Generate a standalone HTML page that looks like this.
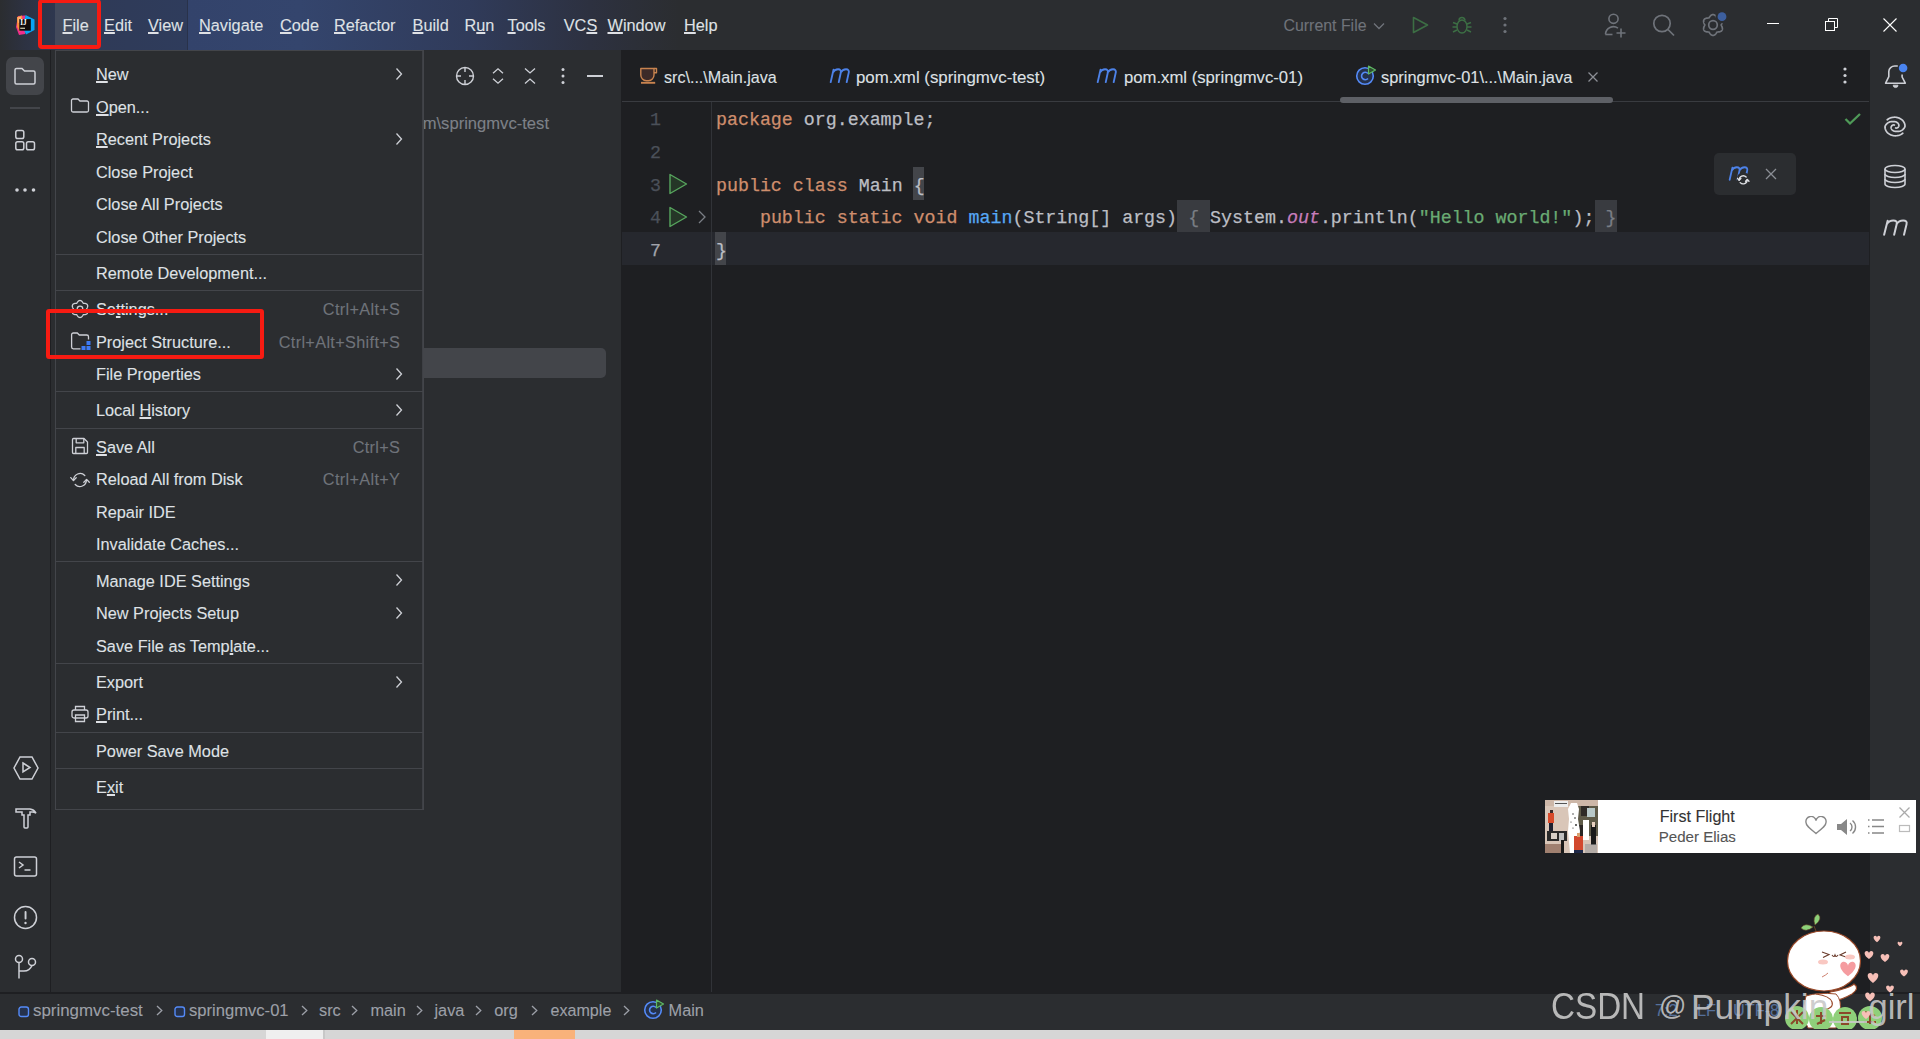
<!DOCTYPE html>
<html><head><meta charset="utf-8"><style>
html,body{margin:0;padding:0;width:1920px;height:1039px;overflow:hidden;background:#2B2D30;}
body>div,body>svg{position:absolute;}
.t{white-space:nowrap;line-height:normal;-webkit-text-stroke:0.1px currentColor;}
u{text-decoration:underline;text-decoration-thickness:1.7px;text-underline-offset:1px;}
</style></head><body>
<div style="left:0px;top:0px;width:1920px;height:1039px;background:#2B2D30;"></div>
<div style="left:0;top:0;width:1920px;height:50px;background:linear-gradient(90deg,#2B2D30 0px,#2D3242 25px,#2F3A56 70px,#2F3C5C 187px,#33436B 188px,#34456D 300px,#303B5A 470px,#2D3140 590px,#2B2D30 680px)"></div>
<div style="left:50px;top:50px;width:1px;height:943px;background:#1E1F22;"></div>
<div style="left:51px;top:50px;width:570px;height:943px;background:#2B2D30;"></div>
<div style="left:621px;top:50px;width:1px;height:943px;background:#1E1F22;"></div>
<div style="left:622px;top:50px;width:1247px;height:943px;background:#1E1F22;"></div>
<div style="left:622px;top:101px;width:1247px;height:1px;background:#393B40;"></div>
<div style="left:1869px;top:50px;width:1px;height:943px;background:#1E1F22;"></div>
<div style="left:1870px;top:50px;width:50px;height:943px;background:#2B2D30;"></div>
<div style="left:0px;top:992px;width:1920px;height:2px;background:#1E1F22;"></div>
<div style="left:0px;top:994px;width:1920px;height:36px;background:#2B2D30;"></div>
<div style="left:0px;top:1030px;width:1920px;height:9px;background:#D6D6D6;"></div>
<div style="left:266px;top:1030px;width:57px;height:9px;background:#EFEFEF;"></div>
<div style="left:323px;top:1030px;width:2px;height:9px;background:#C8C8C8;"></div>
<div style="left:514px;top:1030px;width:61px;height:9px;background:#F9B27A;"></div>
<div style="left:622px;top:232px;width:1247px;height:33px;background:#26282E;"></div>
<div style="left:711px;top:102px;width:1px;height:890px;background:#313338;"></div>
<div class="t" style="left:650px;top:110.26px;font-size:18.3px;color:#4B5059;font-family:'Liberation Mono', monospace;-webkit-text-stroke:0.25px currentColor;">1</div>
<div class="t" style="left:650px;top:142.93px;font-size:18.3px;color:#4B5059;font-family:'Liberation Mono', monospace;-webkit-text-stroke:0.25px currentColor;">2</div>
<div class="t" style="left:650px;top:175.60px;font-size:18.3px;color:#4B5059;font-family:'Liberation Mono', monospace;-webkit-text-stroke:0.25px currentColor;">3</div>
<div class="t" style="left:650px;top:208.27px;font-size:18.3px;color:#4B5059;font-family:'Liberation Mono', monospace;-webkit-text-stroke:0.25px currentColor;">4</div>
<div class="t" style="left:650px;top:240.94px;font-size:18.3px;color:#A1A3AB;font-family:'Liberation Mono', monospace;-webkit-text-stroke:0.25px currentColor;">7</div>
<div class="t" style="left:716.0px;top:110.26px;font-size:18.3px;color:#CF8E6D;font-family:'Liberation Mono', monospace;-webkit-text-stroke:0.25px currentColor;">package</div>
<div class="t" style="left:803.84px;top:110.26px;font-size:18.3px;color:#BCBEC4;font-family:'Liberation Mono', monospace;-webkit-text-stroke:0.25px currentColor;">org.example;</div>
<div class="t" style="left:716.0px;top:175.60px;font-size:18.3px;color:#CF8E6D;font-family:'Liberation Mono', monospace;-webkit-text-stroke:0.25px currentColor;">public class</div>
<div class="t" style="left:858.74px;top:175.60px;font-size:18.3px;color:#BCBEC4;font-family:'Liberation Mono', monospace;-webkit-text-stroke:0.25px currentColor;">Main</div>
<div style="left:913px;top:167px;width:11px;height:33px;background:#43454A;"></div>
<div class="t" style="left:913.64px;top:175.60px;font-size:18.3px;color:#BCBEC4;font-family:'Liberation Mono', monospace;-webkit-text-stroke:0.25px currentColor;">{</div>
<div class="t" style="left:759.92px;top:208.27px;font-size:18.3px;color:#CF8E6D;font-family:'Liberation Mono', monospace;-webkit-text-stroke:0.25px currentColor;">public static void</div>
<div class="t" style="left:968.54px;top:208.27px;font-size:18.3px;color:#56A8F5;font-family:'Liberation Mono', monospace;-webkit-text-stroke:0.25px currentColor;">main</div>
<div class="t" style="left:1012.46px;top:208.27px;font-size:18.3px;color:#BCBEC4;font-family:'Liberation Mono', monospace;-webkit-text-stroke:0.25px currentColor;">(String[] args)</div>
<div style="left:1177px;top:200px;width:33px;height:32px;background:#393B40;"></div>
<div class="t" style="left:1188.14px;top:208.27px;font-size:18.3px;color:#7A7E85;font-family:'Liberation Mono', monospace;-webkit-text-stroke:0.25px currentColor;">{</div>
<div class="t" style="left:1210.1px;top:208.27px;font-size:18.3px;color:#BCBEC4;font-family:'Liberation Mono', monospace;-webkit-text-stroke:0.25px currentColor;">System.</div>
<div class="t" style="left:1286.96px;top:208.27px;font-size:18.3px;color:#C77DBB;font-family:'Liberation Mono', monospace;-webkit-text-stroke:0.25px currentColor;font-style:italic">out</div>
<div class="t" style="left:1319.9px;top:208.27px;font-size:18.3px;color:#BCBEC4;font-family:'Liberation Mono', monospace;-webkit-text-stroke:0.25px currentColor;">.println(</div>
<div class="t" style="left:1418.72px;top:208.27px;font-size:18.3px;color:#6AAB73;font-family:'Liberation Mono', monospace;-webkit-text-stroke:0.25px currentColor;">"Hello world!"</div>
<div class="t" style="left:1572.44px;top:208.27px;font-size:18.3px;color:#BCBEC4;font-family:'Liberation Mono', monospace;-webkit-text-stroke:0.25px currentColor;">);</div>
<div style="left:1595px;top:200px;width:22px;height:32px;background:#393B40;"></div>
<div class="t" style="left:1605.38px;top:208.27px;font-size:18.3px;color:#7A7E85;font-family:'Liberation Mono', monospace;-webkit-text-stroke:0.25px currentColor;">}</div>
<div style="left:715px;top:232px;width:11px;height:33px;background:#43454A;"></div>
<div class="t" style="left:716.0px;top:240.94px;font-size:18.3px;color:#BCBEC4;font-family:'Liberation Mono', monospace;-webkit-text-stroke:0.25px currentColor;">}</div>
<div class="t" style="left:549px;top:113.98px;font-size:16.6px;color:#7D8188;font-family:'Liberation Sans', sans-serif;transform:translateX(-100%)">D:\program\springmvc-test</div>
<div style="left:400px;top:348px;width:206px;height:30px;background:#43454A;border-radius:5px"></div>
<div style="left:55px;top:50px;width:369px;height:760px;background:#2B2D30;box-sizing:border-box;border:1px solid #43454A"></div>
<div style="left:422px;top:51px;width:1px;height:758px;background:#3E4045;"></div>
<div class="t" style="left:96px;top:65.00px;font-size:16.3px;color:#DFE1E5;font-family:'Liberation Sans', sans-serif;"><u>N</u>ew</div>
<svg style="left:394px;top:67px;" width="10" height="14" viewBox="0 0 10 14"><path d="M2.5 1.5 L7.5 7 L2.5 12.5" fill="none" stroke="#CED0D6" stroke-width="1.3"/></svg>
<div class="t" style="left:96px;top:97.50px;font-size:16.3px;color:#DFE1E5;font-family:'Liberation Sans', sans-serif;"><u>O</u>pen...</div>
<svg style="left:70px;top:96px;" width="22" height="21" viewBox="0 0 22 21"><path d="M1.5 4.5 v10 a1.5 1.5 0 0 0 1.5 1.5 h14 a1.5 1.5 0 0 0 1.5 -1.5 v-8 a1.5 1.5 0 0 0 -1.5 -1.5 h-7 l-2 -2 h-5 a1.5 1.5 0 0 0 -1.5 1.5 z" fill="none" stroke="#CED0D6" stroke-width="1.3"/></svg>
<div class="t" style="left:96px;top:130.00px;font-size:16.3px;color:#DFE1E5;font-family:'Liberation Sans', sans-serif;"><u>R</u>ecent Projects</div>
<svg style="left:394px;top:132px;" width="10" height="14" viewBox="0 0 10 14"><path d="M2.5 1.5 L7.5 7 L2.5 12.5" fill="none" stroke="#CED0D6" stroke-width="1.3"/></svg>
<div class="t" style="left:96px;top:162.50px;font-size:16.3px;color:#DFE1E5;font-family:'Liberation Sans', sans-serif;">Close Project</div>
<div class="t" style="left:96px;top:195.00px;font-size:16.3px;color:#DFE1E5;font-family:'Liberation Sans', sans-serif;">Close All Projects</div>
<div class="t" style="left:96px;top:227.50px;font-size:16.3px;color:#DFE1E5;font-family:'Liberation Sans', sans-serif;">Close Other Projects</div>
<div style="left:56px;top:254px;width:367px;height:1px;background:#43454A;"></div>
<div class="t" style="left:96px;top:263.81px;font-size:16.3px;color:#DFE1E5;font-family:'Liberation Sans', sans-serif;">Remote Development...</div>
<div style="left:56px;top:290px;width:367px;height:1px;background:#43454A;"></div>
<div class="t" style="left:96px;top:300.12px;font-size:16.3px;color:#DFE1E5;font-family:'Liberation Sans', sans-serif;">Se<u>t</u>tings...</div>
<div class="t" style="left:400.3px;top:300.12px;font-size:16.3px;color:#6F737A;font-family:'Liberation Sans', sans-serif;transform:translateX(-100%);letter-spacing:0.33px">Ctrl+Alt+S</div>
<svg style="left:70px;top:299px;" width="22" height="21" viewBox="0 0 22 21"><g fill="none" stroke="#CED0D6" stroke-width="1.3" stroke-linejoin="round"><path d="M16.60 10.00 L16.65 10.17 L16.73 10.35 L16.83 10.54 L16.93 10.73 L17.03 10.93 L17.14 11.13 L17.24 11.34 L17.34 11.56 L17.43 11.78 L17.50 12.01 L17.57 12.24 L17.62 12.48 L17.65 12.71 L17.67 12.94 L17.67 13.18 L17.65 13.40 L17.61 13.63 L17.54 13.84 L17.46 14.05 L17.36 14.25 L17.24 14.44 L17.10 14.61 L16.94 14.77 L16.77 14.92 L16.59 15.05 L16.39 15.17 L16.17 15.27 L15.95 15.36 L15.73 15.43 L15.49 15.49 L15.26 15.54 L15.02 15.58 L14.78 15.60 L14.55 15.62 L14.32 15.63 L14.10 15.64 L13.88 15.64 L13.67 15.65 L13.48 15.67 L13.30 15.72 L13.17 15.85 L13.06 16.01 L12.95 16.18 L12.83 16.36 L12.72 16.56 L12.59 16.75 L12.46 16.94 L12.32 17.14 L12.17 17.32 L12.01 17.50 L11.84 17.68 L11.67 17.84 L11.48 17.98 L11.29 18.12 L11.08 18.23 L10.88 18.33 L10.66 18.40 L10.44 18.46 L10.22 18.49 L10.00 18.50 L9.78 18.49 L9.56 18.46 L9.34 18.40 L9.12 18.33 L8.92 18.23 L8.71 18.12 L8.52 17.98 L8.33 17.84 L8.16 17.68 L7.99 17.50 L7.83 17.32 L7.68 17.14 L7.54 16.94 L7.41 16.75 L7.28 16.56 L7.17 16.36 L7.05 16.18 L6.94 16.01 L6.83 15.85 L6.70 15.72 L6.52 15.67 L6.33 15.65 L6.12 15.64 L5.90 15.64 L5.68 15.63 L5.45 15.62 L5.22 15.60 L4.98 15.58 L4.74 15.54 L4.51 15.49 L4.27 15.43 L4.05 15.36 L3.83 15.27 L3.61 15.17 L3.41 15.05 L3.23 14.92 L3.06 14.77 L2.90 14.61 L2.76 14.44 L2.64 14.25 L2.54 14.05 L2.46 13.84 L2.39 13.63 L2.35 13.40 L2.33 13.18 L2.33 12.94 L2.35 12.71 L2.38 12.48 L2.43 12.24 L2.50 12.01 L2.57 11.78 L2.66 11.56 L2.76 11.34 L2.86 11.13 L2.97 10.93 L3.07 10.73 L3.17 10.54 L3.27 10.35 L3.35 10.17 L3.40 10.00 L3.35 9.83 L3.27 9.65 L3.17 9.46 L3.07 9.27 L2.97 9.07 L2.86 8.87 L2.76 8.66 L2.66 8.44 L2.57 8.22 L2.50 7.99 L2.43 7.76 L2.38 7.52 L2.35 7.29 L2.33 7.06 L2.33 6.82 L2.35 6.60 L2.39 6.37 L2.46 6.16 L2.54 5.95 L2.64 5.75 L2.76 5.56 L2.90 5.39 L3.06 5.23 L3.23 5.08 L3.41 4.95 L3.61 4.83 L3.83 4.73 L4.05 4.64 L4.27 4.57 L4.51 4.51 L4.74 4.46 L4.98 4.42 L5.22 4.40 L5.45 4.38 L5.68 4.37 L5.90 4.36 L6.12 4.36 L6.33 4.35 L6.52 4.33 L6.70 4.28 L6.83 4.15 L6.94 3.99 L7.05 3.82 L7.17 3.64 L7.28 3.44 L7.41 3.25 L7.54 3.06 L7.68 2.86 L7.83 2.68 L7.99 2.50 L8.16 2.32 L8.33 2.16 L8.52 2.02 L8.71 1.88 L8.92 1.77 L9.12 1.67 L9.34 1.60 L9.56 1.54 L9.78 1.51 L10.00 1.50 L10.22 1.51 L10.44 1.54 L10.66 1.60 L10.88 1.67 L11.08 1.77 L11.29 1.88 L11.48 2.02 L11.67 2.16 L11.84 2.32 L12.01 2.50 L12.17 2.68 L12.32 2.86 L12.46 3.06 L12.59 3.25 L12.72 3.44 L12.83 3.64 L12.95 3.82 L13.06 3.99 L13.17 4.15 L13.30 4.28 L13.48 4.33 L13.67 4.35 L13.88 4.36 L14.10 4.36 L14.32 4.37 L14.55 4.38 L14.78 4.40 L15.02 4.42 L15.26 4.46 L15.49 4.51 L15.73 4.57 L15.95 4.64 L16.17 4.73 L16.39 4.83 L16.59 4.95 L16.77 5.08 L16.94 5.23 L17.10 5.39 L17.24 5.56 L17.36 5.75 L17.46 5.95 L17.54 6.16 L17.61 6.37 L17.65 6.60 L17.67 6.82 L17.67 7.06 L17.65 7.29 L17.62 7.52 L17.57 7.76 L17.50 7.99 L17.43 8.22 L17.34 8.44 L17.24 8.66 L17.14 8.87 L17.03 9.07 L16.93 9.27 L16.83 9.46 L16.73 9.65 L16.65 9.83 L16.60 10.00 Z"/><circle cx="10" cy="10" r="2.8"/></g></svg>
<div class="t" style="left:96px;top:332.62px;font-size:16.3px;color:#DFE1E5;font-family:'Liberation Sans', sans-serif;">Project Structure...</div>
<div class="t" style="left:400.3px;top:332.62px;font-size:16.3px;color:#6F737A;font-family:'Liberation Sans', sans-serif;transform:translateX(-100%);letter-spacing:0.33px">Ctrl+Alt+Shift+S</div>
<svg style="left:70px;top:331px;" width="22" height="21" viewBox="0 0 22 21"><path d="M10.5 17.8 H3.3 a1.7 1.7 0 0 1 -1.7 -1.7 V3.7 a1.7 1.7 0 0 1 1.7 -1.7 H7.3 L9.3 4 H16.8 a1.7 1.7 0 0 1 1.7 1.7 V8.5" fill="none" stroke="#CED0D6" stroke-width="1.3"/><rect x="16.5" y="10" width="4" height="4" fill="#3D7BF5"/><rect x="11.5" y="15" width="4" height="4" fill="#3D7BF5"/><rect x="16.5" y="15" width="4" height="4" fill="#3D7BF5"/></svg>
<div class="t" style="left:96px;top:365.12px;font-size:16.3px;color:#DFE1E5;font-family:'Liberation Sans', sans-serif;">File Properties</div>
<svg style="left:394px;top:367px;" width="10" height="14" viewBox="0 0 10 14"><path d="M2.5 1.5 L7.5 7 L2.5 12.5" fill="none" stroke="#CED0D6" stroke-width="1.3"/></svg>
<div style="left:56px;top:391px;width:367px;height:1px;background:#43454A;"></div>
<div class="t" style="left:96px;top:401.43px;font-size:16.3px;color:#DFE1E5;font-family:'Liberation Sans', sans-serif;">Local <u>H</u>istory</div>
<svg style="left:394px;top:403px;" width="10" height="14" viewBox="0 0 10 14"><path d="M2.5 1.5 L7.5 7 L2.5 12.5" fill="none" stroke="#CED0D6" stroke-width="1.3"/></svg>
<div style="left:56px;top:428px;width:367px;height:1px;background:#43454A;"></div>
<div class="t" style="left:96px;top:437.74px;font-size:16.3px;color:#DFE1E5;font-family:'Liberation Sans', sans-serif;"><u>S</u>ave All</div>
<div class="t" style="left:400.3px;top:437.74px;font-size:16.3px;color:#6F737A;font-family:'Liberation Sans', sans-serif;transform:translateX(-100%);letter-spacing:0.33px">Ctrl+S</div>
<svg style="left:70px;top:436px;" width="22" height="21" viewBox="0 0 22 21"><g fill="none" stroke="#CED0D6" stroke-width="1.3" stroke-linejoin="round"><path d="M3.5 2.5 H14 L17.5 6 V16.5 a1 1 0 0 1 -1 1 H3.5 a1 1 0 0 1 -1 -1 V3.5 a1 1 0 0 1 1 -1 z"/><path d="M6.2 2.5 V6.8 H13.8 V2.5"/><path d="M5.8 17.5 V11.5 H14.2 V17.5"/></g></svg>
<div class="t" style="left:96px;top:470.24px;font-size:16.3px;color:#DFE1E5;font-family:'Liberation Sans', sans-serif;">Reload All from Disk</div>
<div class="t" style="left:400.3px;top:470.24px;font-size:16.3px;color:#6F737A;font-family:'Liberation Sans', sans-serif;transform:translateX(-100%);letter-spacing:0.33px">Ctrl+Alt+Y</div>
<svg style="left:70px;top:469px;" width="22" height="21" viewBox="0 0 22 21"><g fill="none" stroke="#CED0D6" stroke-width="1.3" stroke-linecap="round" stroke-linejoin="round"><path d="M3.6 11.2 A6.5 6.5 0 0 1 14.8 6.5"/><path d="M0.8 8.6 L3.4 11.6 L6.2 8.8"/><path d="M16.4 10.8 A6.5 6.5 0 0 1 5.2 15.5"/><path d="M13.8 13.2 L16.6 10.4 L19.3 13.3"/></g></svg>
<div class="t" style="left:96px;top:502.74px;font-size:16.3px;color:#DFE1E5;font-family:'Liberation Sans', sans-serif;">Repair IDE</div>
<div class="t" style="left:96px;top:535.24px;font-size:16.3px;color:#DFE1E5;font-family:'Liberation Sans', sans-serif;">Invalidate Caches...</div>
<div style="left:56px;top:561px;width:367px;height:1px;background:#43454A;"></div>
<div class="t" style="left:96px;top:571.55px;font-size:16.3px;color:#DFE1E5;font-family:'Liberation Sans', sans-serif;">Manage IDE Settings</div>
<svg style="left:394px;top:573px;" width="10" height="14" viewBox="0 0 10 14"><path d="M2.5 1.5 L7.5 7 L2.5 12.5" fill="none" stroke="#CED0D6" stroke-width="1.3"/></svg>
<div class="t" style="left:96px;top:604.05px;font-size:16.3px;color:#DFE1E5;font-family:'Liberation Sans', sans-serif;">New Projects Setup</div>
<svg style="left:394px;top:606px;" width="10" height="14" viewBox="0 0 10 14"><path d="M2.5 1.5 L7.5 7 L2.5 12.5" fill="none" stroke="#CED0D6" stroke-width="1.3"/></svg>
<div class="t" style="left:96px;top:636.55px;font-size:16.3px;color:#DFE1E5;font-family:'Liberation Sans', sans-serif;">Save File as Temp<u>l</u>ate...</div>
<div style="left:56px;top:663px;width:367px;height:1px;background:#43454A;"></div>
<div class="t" style="left:96px;top:672.86px;font-size:16.3px;color:#DFE1E5;font-family:'Liberation Sans', sans-serif;">Export</div>
<svg style="left:394px;top:675px;" width="10" height="14" viewBox="0 0 10 14"><path d="M2.5 1.5 L7.5 7 L2.5 12.5" fill="none" stroke="#CED0D6" stroke-width="1.3"/></svg>
<div class="t" style="left:96px;top:705.36px;font-size:16.3px;color:#DFE1E5;font-family:'Liberation Sans', sans-serif;"><u>P</u>rint...</div>
<svg style="left:70px;top:704px;" width="22" height="21" viewBox="0 0 22 21"><g fill="none" stroke="#CED0D6" stroke-width="1.3"><path d="M5.5 6 v-3.5 h9 v3.5"/><rect x="2" y="6" width="16" height="8" rx="2"/><path d="M5.5 11 h9 v6.5 h-9 z"/></g></svg>
<div style="left:56px;top:732px;width:367px;height:1px;background:#43454A;"></div>
<div class="t" style="left:96px;top:741.67px;font-size:16.3px;color:#DFE1E5;font-family:'Liberation Sans', sans-serif;">Power Save Mode</div>
<div style="left:56px;top:768px;width:367px;height:1px;background:#43454A;"></div>
<div class="t" style="left:96px;top:777.98px;font-size:16.3px;color:#DFE1E5;font-family:'Liberation Sans', sans-serif;">E<u>x</u>it</div>
<div style="left:187px;top:0px;width:1px;height:50px;background:#29324A;"></div>
<div style="left:55px;top:3px;width:42px;height:42px;background:#434A5C;"></div>
<svg style="left:14px;top:14px;" width="22" height="22" viewBox="0 0 22 22"><path d="M4 2 L11 1.5 L13 6 L11 20 L5 21 L2 13 Z" fill="#F02E8C"/><path d="M3 3 L8 1.5 L9 9 L6 18 L3 13 Z" fill="#FC8A3A"/><path d="M3.5 3.5 L7 2.5 L7 8 L4 9 Z" fill="#FFB070"/><path d="M11.5 1 L20.5 5.5 L20.5 16 L12 20.5 L9 14 Z" fill="#08A4F5"/><rect x="5.3" y="5.1" width="11.5" height="11.6" fill="#120A0A"/><text x="6.2" y="11.3" font-family="Liberation Serif" font-weight="bold" font-size="7.2" fill="#fff">IJ</text><rect x="6.2" y="13.7" width="4.8" height="1.1" fill="#E8E0C0"/></svg>
<div class="t" style="left:62.5px;top:16.25px;font-size:16.3px;color:#DFE1E5;font-family:'Liberation Sans', sans-serif;"><u>F</u>ile</div>
<div class="t" style="left:104px;top:16.25px;font-size:16.3px;color:#DFE1E5;font-family:'Liberation Sans', sans-serif;"><u>E</u>dit</div>
<div class="t" style="left:148px;top:16.25px;font-size:16.3px;color:#DFE1E5;font-family:'Liberation Sans', sans-serif;"><u>V</u>iew</div>
<div class="t" style="left:199px;top:16.25px;font-size:16.3px;color:#DFE1E5;font-family:'Liberation Sans', sans-serif;"><u>N</u>avigate</div>
<div class="t" style="left:280px;top:16.25px;font-size:16.3px;color:#DFE1E5;font-family:'Liberation Sans', sans-serif;"><u>C</u>ode</div>
<div class="t" style="left:334px;top:16.25px;font-size:16.3px;color:#DFE1E5;font-family:'Liberation Sans', sans-serif;"><u>R</u>efactor</div>
<div class="t" style="left:412.5px;top:16.25px;font-size:16.3px;color:#DFE1E5;font-family:'Liberation Sans', sans-serif;"><u>B</u>uild</div>
<div class="t" style="left:464.5px;top:16.25px;font-size:16.3px;color:#DFE1E5;font-family:'Liberation Sans', sans-serif;">R<u>u</u>n</div>
<div class="t" style="left:507.5px;top:16.25px;font-size:16.3px;color:#DFE1E5;font-family:'Liberation Sans', sans-serif;"><u>T</u>ools</div>
<div class="t" style="left:563.75px;top:16.25px;font-size:16.3px;color:#DFE1E5;font-family:'Liberation Sans', sans-serif;">VC<u>S</u></div>
<div class="t" style="left:607.5px;top:16.25px;font-size:16.3px;color:#DFE1E5;font-family:'Liberation Sans', sans-serif;"><u>W</u>indow</div>
<div class="t" style="left:684px;top:16.25px;font-size:16.3px;color:#DFE1E5;font-family:'Liberation Sans', sans-serif;"><u>H</u>elp</div>
<div style="left:38px;top:-1px;width:63px;height:50px;background:transparent;box-sizing:border-box;border:4px solid #F71B12;border-radius:4px"></div>
<div class="t" style="left:1283.5px;top:16.61px;font-size:15.9px;color:#6F737A;font-family:'Liberation Sans', sans-serif;">Current File</div>
<svg style="left:1372px;top:21px;" width="14" height="10" viewBox="0 0 14 10"><path d="M2 2.5 L7 7.5 L12 2.5" fill="none" stroke="#6F737A" stroke-width="1.3"/></svg>
<svg style="left:1410px;top:15px;" width="20" height="20" viewBox="0 0 20 20"><path d="M3.5 2.5 L17.5 10 L3.5 17.5 Z" fill="none" stroke="#3C6E44" stroke-width="1.6" stroke-linejoin="round"/></svg>
<svg style="left:1451px;top:15px;" width="22" height="20" viewBox="0 0 22 20"><g fill="none" stroke="#3C6E44" stroke-width="1.5"><ellipse cx="11" cy="11.5" rx="5" ry="6.5"/><path d="M8 5.5 a3 3 0 0 1 6 0"/><path d="M6 9 L2 7.5 M6 12 H1.5 M6 15 L2 17 M16 9 L20 7.5 M16 12 H20.5 M16 15 L20 17"/></g></svg>
<svg style="left:1501px;top:16px;" width="8" height="20" viewBox="0 0 8 20"><circle cx="4" cy="2.5" r="1.6" fill="#6F737A"/><circle cx="4" cy="9" r="1.6" fill="#6F737A"/><circle cx="4" cy="15.5" r="1.6" fill="#6F737A"/></svg>
<svg style="left:1602px;top:12px;" width="26" height="26" viewBox="0 0 26 26"><g fill="none" stroke="#6F737A" stroke-width="1.6"><circle cx="11.5" cy="6.8" r="4.6"/><path d="M3.5 22.3 a8 8 0 0 1 12.5 -6.2"/><path d="M3.3 22.5 H10.5"/><path d="M19 16.5 v9 M14.5 21 h9"/></g></svg>
<svg style="left:1651px;top:13px;" width="26" height="26" viewBox="0 0 26 26"><g fill="none" stroke="#6F737A" stroke-width="1.7"><circle cx="11" cy="10.5" r="8.2"/><path d="M17 16.5 L23 22.5"/></g></svg>
<svg style="left:1698px;top:10px;" width="30" height="30" viewBox="0 0 30 30"><defs><mask id="gm"><rect width="30" height="30" fill="#fff"/><circle cx="24" cy="6.7" r="6.5" fill="#000"/></mask></defs><g fill="none" stroke="#6F737A" stroke-width="1.7" mask="url(#gm)"><path d="M23.20 15.00 L23.26 15.22 L23.35 15.44 L23.46 15.67 L23.58 15.90 L23.70 16.15 L23.82 16.40 L23.93 16.66 L24.04 16.92 L24.14 17.19 L24.23 17.47 L24.30 17.75 L24.35 18.04 L24.39 18.32 L24.40 18.61 L24.40 18.89 L24.36 19.17 L24.31 19.44 L24.23 19.70 L24.13 19.96 L24.01 20.20 L23.86 20.43 L23.69 20.64 L23.50 20.84 L23.29 21.03 L23.07 21.19 L22.83 21.34 L22.57 21.47 L22.31 21.58 L22.04 21.68 L21.76 21.76 L21.47 21.82 L21.19 21.87 L20.90 21.91 L20.62 21.94 L20.34 21.96 L20.07 21.98 L19.81 21.99 L19.56 22.01 L19.32 22.04 L19.10 22.10 L18.94 22.26 L18.80 22.45 L18.65 22.66 L18.51 22.88 L18.36 23.11 L18.20 23.34 L18.03 23.57 L17.86 23.79 L17.67 24.02 L17.47 24.23 L17.26 24.43 L17.04 24.62 L16.82 24.79 L16.58 24.95 L16.33 25.08 L16.07 25.19 L15.81 25.28 L15.54 25.35 L15.27 25.39 L15.00 25.40 L14.73 25.39 L14.46 25.35 L14.19 25.28 L13.93 25.19 L13.67 25.08 L13.42 24.95 L13.18 24.79 L12.96 24.62 L12.74 24.43 L12.53 24.23 L12.33 24.02 L12.14 23.79 L11.97 23.57 L11.80 23.34 L11.64 23.11 L11.49 22.88 L11.35 22.66 L11.20 22.45 L11.06 22.26 L10.90 22.10 L10.68 22.04 L10.44 22.01 L10.19 21.99 L9.93 21.98 L9.66 21.96 L9.38 21.94 L9.10 21.91 L8.81 21.87 L8.53 21.82 L8.24 21.76 L7.96 21.68 L7.69 21.58 L7.43 21.47 L7.17 21.34 L6.93 21.19 L6.71 21.03 L6.50 20.84 L6.31 20.64 L6.14 20.43 L5.99 20.20 L5.87 19.96 L5.77 19.70 L5.69 19.44 L5.64 19.17 L5.60 18.89 L5.60 18.61 L5.61 18.32 L5.65 18.04 L5.70 17.75 L5.77 17.47 L5.86 17.19 L5.96 16.92 L6.07 16.66 L6.18 16.40 L6.30 16.15 L6.42 15.90 L6.54 15.67 L6.65 15.44 L6.74 15.22 L6.80 15.00 L6.74 14.78 L6.65 14.56 L6.54 14.33 L6.42 14.10 L6.30 13.85 L6.18 13.60 L6.07 13.34 L5.96 13.08 L5.86 12.81 L5.77 12.53 L5.70 12.25 L5.65 11.96 L5.61 11.68 L5.60 11.39 L5.60 11.11 L5.64 10.83 L5.69 10.56 L5.77 10.30 L5.87 10.04 L5.99 9.80 L6.14 9.57 L6.31 9.36 L6.50 9.16 L6.71 8.97 L6.93 8.81 L7.17 8.66 L7.43 8.53 L7.69 8.42 L7.96 8.32 L8.24 8.24 L8.53 8.18 L8.81 8.13 L9.10 8.09 L9.38 8.06 L9.66 8.04 L9.93 8.02 L10.19 8.01 L10.44 7.99 L10.68 7.96 L10.90 7.90 L11.06 7.74 L11.20 7.55 L11.35 7.34 L11.49 7.12 L11.64 6.89 L11.80 6.66 L11.97 6.43 L12.14 6.21 L12.33 5.98 L12.53 5.77 L12.74 5.57 L12.96 5.38 L13.18 5.21 L13.42 5.05 L13.67 4.92 L13.93 4.81 L14.19 4.72 L14.46 4.65 L14.73 4.61 L15.00 4.60 L15.27 4.61 L15.54 4.65 L15.81 4.72 L16.07 4.81 L16.33 4.92 L16.58 5.05 L16.82 5.21 L17.04 5.38 L17.26 5.57 L17.47 5.77 L17.67 5.98 L17.86 6.21 L18.03 6.43 L18.20 6.66 L18.36 6.89 L18.51 7.12 L18.65 7.34 L18.80 7.55 L18.94 7.74 L19.10 7.90 L19.32 7.96 L19.56 7.99 L19.81 8.01 L20.07 8.02 L20.34 8.04 L20.62 8.06 L20.90 8.09 L21.19 8.13 L21.47 8.18 L21.76 8.24 L22.04 8.32 L22.31 8.42 L22.57 8.53 L22.83 8.66 L23.07 8.81 L23.29 8.97 L23.50 9.16 L23.69 9.36 L23.86 9.57 L24.01 9.80 L24.13 10.04 L24.23 10.30 L24.31 10.56 L24.36 10.83 L24.40 11.11 L24.40 11.39 L24.39 11.68 L24.35 11.96 L24.30 12.25 L24.23 12.53 L24.14 12.81 L24.04 13.08 L23.93 13.34 L23.82 13.60 L23.70 13.85 L23.58 14.10 L23.46 14.33 L23.35 14.56 L23.26 14.78 L23.20 15.00 Z"/><circle cx="15" cy="15" r="4.3"/></g><circle cx="24" cy="6.7" r="4.4" fill="#3D5F9E"/></svg>
<div style="left:1767px;top:23px;width:12px;height:1px;background:#FFFFFF;"></div>
<svg style="left:1824px;top:17px;" width="16" height="16" viewBox="0 0 16 16"><g fill="none" stroke="#FFFFFF" stroke-width="1"><rect x="1.5" y="4.5" width="9" height="9"/><path d="M4.5 4.5 v-3 h9 v9 h-3"/></g></svg>
<svg style="left:1882px;top:17px;" width="16" height="16" viewBox="0 0 16 16"><path d="M1.5 1.5 L14.5 14.5 M14.5 1.5 L1.5 14.5" stroke="#FFFFFF" stroke-width="1.1"/></svg>
<svg style="left:455px;top:66px;" width="20" height="20" viewBox="0 0 20 20"><g fill="none" stroke="#CED0D6" stroke-width="1.4"><circle cx="10" cy="10" r="8.5"/><path d="M10 1.5 v4.5 M10 14 v4.5 M1.5 10 h4.5 M14 10 h4.5"/></g></svg>
<svg style="left:490px;top:66px;" width="16" height="20" viewBox="0 0 16 20"><g fill="none" stroke="#CED0D6" stroke-width="1.3"><path d="M3 7.3 L8 2.8 L13 7.3"/><path d="M3 12.7 L8 17.2 L13 12.7"/></g></svg>
<svg style="left:522px;top:66px;" width="16" height="20" viewBox="0 0 16 20"><g fill="none" stroke="#CED0D6" stroke-width="1.3"><path d="M3 2.5 L8 7 L13 2.5"/><path d="M3 17.5 L8 13 L13 17.5"/></g></svg>
<svg style="left:559px;top:66px;" width="8" height="20" viewBox="0 0 8 20"><circle cx="4" cy="3.5" r="1.5" fill="#CED0D6"/><circle cx="4" cy="10" r="1.5" fill="#CED0D6"/><circle cx="4" cy="16.5" r="1.5" fill="#CED0D6"/></svg>
<div style="left:587px;top:75px;width:16px;height:2px;background:#CED0D6;"></div>
<div style="left:6px;top:57px;width:38px;height:38px;background:#43454A;border-radius:7px"></div>
<svg style="left:13px;top:66px;" width="24" height="22" viewBox="0 0 24 22"><path d="M2 3.5 v13 a1.5 1.5 0 0 0 1.5 1.5 h17 a1.5 1.5 0 0 0 1.5 -1.5 v-10 a1.5 1.5 0 0 0 -1.5 -1.5 h-9 l-2.5 -2.5 h-5.5 a1.5 1.5 0 0 0 -1.5 1.5 z" fill="none" stroke="#CED0D6" stroke-width="1.5"/></svg>
<div style="left:10px;top:107px;width:30px;height:2px;background:#43454A;"></div>
<svg style="left:13px;top:128px;" width="24" height="24" viewBox="0 0 24 24"><g fill="none" stroke="#CED0D6" stroke-width="1.5"><rect x="2.8" y="2.5" width="8" height="8" rx="1.8"/><rect x="2.8" y="13.8" width="8" height="8" rx="1.8"/><rect x="13.5" y="13.8" width="8" height="8" rx="1.8"/></g></svg>
<svg style="left:13px;top:183px;" width="26" height="14" viewBox="0 0 26 14"><circle cx="4" cy="7" r="1.8" fill="#CED0D6"/><circle cx="12" cy="7" r="1.8" fill="#CED0D6"/><circle cx="20.5" cy="7" r="1.8" fill="#CED0D6"/></svg>
<svg style="left:13px;top:755px;" width="26" height="26" viewBox="0 0 26 26"><g fill="none" stroke="#CED0D6" stroke-width="1.5"><path d="M7 2 h12 l6 11 -6 11 h-12 l-6 -11 z"/><path d="M10 8 L17 12.5 L10 17 Z"/></g></svg>
<svg style="left:13px;top:805px;" width="26" height="26" viewBox="0 0 26 26"><g fill="none" stroke="#CED0D6" stroke-width="1.5"><path d="M3 4 h14 a8 8 0 0 1 6 4 a7 7 0 0 0 -5 -1 h-1 v3 h-2 v12 a1 1 0 0 1 -1 1 h-2 a1 1 0 0 1 -1 -1 v-12 h-2 v-3 h-6 z"/></g></svg>
<svg style="left:13px;top:855px;" width="26" height="24" viewBox="0 0 26 24"><g fill="none" stroke="#CED0D6" stroke-width="1.5"><rect x="1.5" y="2" width="22" height="19" rx="2"/><path d="M6 7 L10 10 L6 13"/><path d="M11.5 15 h6"/></g></svg>
<svg style="left:12px;top:904px;" width="27" height="27" viewBox="0 0 27 27"><g fill="none" stroke="#CED0D6" stroke-width="1.5"><circle cx="13.5" cy="13.5" r="11"/></g><rect x="12.6" y="7" width="1.9" height="8.5" rx="0.9" fill="#CED0D6"/><circle cx="13.5" cy="19" r="1.2" fill="#CED0D6"/></svg>
<svg style="left:13px;top:954px;" width="26" height="26" viewBox="0 0 26 26"><g fill="none" stroke="#CED0D6" stroke-width="1.5"><circle cx="6" cy="5" r="3.5"/><circle cx="19" cy="8" r="3.5"/><path d="M6 8.5 v16"/><path d="M6 17 h4 a9 9 0 0 0 9 -5.5"/></g></svg>
<svg style="left:638px;top:66px;" width="22" height="22" viewBox="0 0 22 22"><g fill="none" stroke="#C8834F" stroke-width="1.4" stroke-linejoin="round"><path d="M2.8 2.5 H16 V9 a5.5 5.8 0 0 1 -5.5 5.8 H8.3 a5.5 5.8 0 0 1 -5.5 -5.8 Z" fill="#3C2A28"/><path d="M16 2.5 H18.5 V6.8 H16"/><path d="M3 16.8 H17.2" stroke-width="1.9"/></g></svg>
<div class="t" style="left:664px;top:68.43px;font-size:16.1px;color:#DFE1E5;font-family:'Liberation Sans', sans-serif;">src\...\Main.java</div>
<svg style="left:829.30px;top:68.20px" width="22.70" height="15.19" viewBox="0 0 20 14" preserveAspectRatio="none"><path d="M1.5 13 L4 1.5 M3.4 4.2 C4.6 2 6.3 1.2 8 1.2 C10 1.2 10.8 2.4 10.4 4.3 L8.6 13 M10.3 4.3 C11.5 2 13.2 1.2 15 1.2 C17 1.2 17.8 2.4 17.4 4.3 L15.6 13" fill="none" stroke="#4D82E8" stroke-width="1.9" vector-effect="non-scaling-stroke" stroke-linecap="round"/></svg>
<div class="t" style="left:856px;top:67.75px;font-size:16.85px;color:#DFE1E5;font-family:'Liberation Sans', sans-serif;">pom.xml (springmvc-test)</div>
<svg style="left:1095.80px;top:68.20px" width="22.70" height="15.19" viewBox="0 0 20 14" preserveAspectRatio="none"><path d="M1.5 13 L4 1.5 M3.4 4.2 C4.6 2 6.3 1.2 8 1.2 C10 1.2 10.8 2.4 10.4 4.3 L8.6 13 M10.3 4.3 C11.5 2 13.2 1.2 15 1.2 C17 1.2 17.8 2.4 17.4 4.3 L15.6 13" fill="none" stroke="#4D82E8" stroke-width="1.9" vector-effect="non-scaling-stroke" stroke-linecap="round"/></svg>
<div class="t" style="left:1124px;top:67.89px;font-size:16.7px;color:#DFE1E5;font-family:'Liberation Sans', sans-serif;">pom.xml (springmvc-01)</div>
<svg style="left:1355px;top:64px;" width="22" height="22" viewBox="0 0 22 22"><circle cx="10" cy="12" r="8.3" fill="#25324D" stroke="#548AF7" stroke-width="1.6"/><path d="M13 9.5 a3.7 3.7 0 1 0 0 5" fill="none" stroke="#548AF7" stroke-width="1.6"/><path d="M13.5 2 L20.5 6 L13.5 10 Z" fill="#2E4D30" stroke="#5FB865" stroke-width="1.2" stroke-linejoin="round"/></svg>
<div class="t" style="left:1381px;top:68.16px;font-size:16.4px;color:#DFE1E5;font-family:'Liberation Sans', sans-serif;">springmvc-01\...\Main.java</div>
<svg style="left:1587px;top:71px;" width="12" height="12" viewBox="0 0 12 12"><path d="M1.5 1.5 L10.5 10.5 M10.5 1.5 L1.5 10.5" stroke="#8C8F96" stroke-width="1.3"/></svg>
<div style="left:1340px;top:97px;width:273px;height:6px;background:#5E6066;border-radius:3px"></div>
<svg style="left:1841px;top:66px;" width="8" height="20" viewBox="0 0 8 20"><circle cx="4" cy="3" r="1.6" fill="#CED0D6"/><circle cx="4" cy="9.5" r="1.6" fill="#CED0D6"/><circle cx="4" cy="16" r="1.6" fill="#CED0D6"/></svg>
<svg style="left:1843px;top:111px;" width="20" height="16" viewBox="0 0 20 16"><path d="M2.5 8 L7 12.5 L17 3" fill="none" stroke="#4F9A58" stroke-width="2.3"/></svg>
<svg style="left:667px;top:173px;" width="22" height="22" viewBox="0 0 22 22"><path d="M3 1.5 L19.5 11 L3 20.5 Z" fill="#253627" stroke="#57A55E" stroke-width="1.4" stroke-linejoin="round"/></svg>
<svg style="left:667px;top:206px;" width="22" height="22" viewBox="0 0 22 22"><path d="M3 1.5 L19.5 11 L3 20.5 Z" fill="#253627" stroke="#57A55E" stroke-width="1.4" stroke-linejoin="round"/></svg>
<svg style="left:696px;top:209px;" width="12" height="16" viewBox="0 0 12 16"><path d="M3 2 L9 8 L3 14" fill="none" stroke="#7A7E85" stroke-width="1.3"/></svg>
<div style="left:1714px;top:153px;width:82px;height:42px;background:#2B2D30;border-radius:5px"></div>
<svg style="left:1728.34px;top:166.23px" width="22.09" height="14.83" viewBox="0 0 20 14" preserveAspectRatio="none"><path d="M1.5 13 L4 1.5 M3.4 4.2 C4.6 2 6.3 1.2 8 1.2 C10 1.2 10.8 2.4 10.4 4.3 L8.6 13 M10.3 4.3 C11.5 2 13.2 1.2 15 1.2 C17 1.2 17.8 2.4 17.4 4.3 L15.6 13" fill="none" stroke="#4D82E8" stroke-width="1.8" vector-effect="non-scaling-stroke" stroke-linecap="round"/></svg>
<div style="left:1737px;top:173px;width:13px;height:13px;background:#2B2D30;border-radius:5px"></div>
<svg style="left:1737px;top:173px;" width="13" height="13" viewBox="0 0 13 13"><g transform="scale(0.62)" fill="none" stroke="#DFE1E5" stroke-width="2.2" stroke-linecap="round" stroke-linejoin="round"><path d="M3.6 11.2 A6.5 6.5 0 0 1 14.8 6.5"/><path d="M0.8 8.6 L3.4 11.6 L6.2 8.8"/><path d="M16.4 10.8 A6.5 6.5 0 0 1 5.2 15.5"/><path d="M13.8 13.2 L16.6 10.4 L19.3 13.3"/></g></svg>
<svg style="left:1764px;top:167px;" width="14" height="14" viewBox="0 0 14 14"><path d="M2 2 L12 12 M12 2 L2 12" stroke="#8C8F96" stroke-width="1.3"/></svg>
<svg style="left:1880px;top:60px;" width="32" height="32" viewBox="0 0 32 32"><g fill="none" stroke="#CED0D6" stroke-width="1.6" stroke-linejoin="round"><path d="M17.8 6 H15 A6 5.5 0 0 0 8.8 11.5 V16.7 L5.6 23.2 H25.3 L22.1 17 V14.5"/><path d="M13.2 25.2 a2.4 2.4 0 0 0 4.8 0 z" fill="#CED0D6" stroke-width="0.8"/></g><circle cx="23.1" cy="8" r="4.3" fill="#4A84F0"/></svg>
<svg style="left:1875px;top:105px;" width="40" height="40" viewBox="0 0 40 40"><path d="M12.22 14.73 L12.93 14.21 L13.69 13.74 L14.49 13.33 L15.33 12.98 L16.19 12.69 L17.07 12.47 L17.97 12.32 L18.88 12.23 L19.79 12.21 L20.69 12.26 L21.59 12.38 L22.46 12.56 L23.32 12.80 L24.14 13.11 L24.93 13.47 L25.67 13.89 L26.37 14.36 L27.02 14.88 L27.62 15.45 L28.15 16.05 L28.62 16.69 L29.03 17.36 L29.37 18.06 L29.64 18.77 L29.83 19.50 L29.96 20.24 L30.01 20.98 L29.91 21.72 L29.58 22.42 L29.18 23.08 L28.73 23.69 L28.22 24.24 L27.67 24.73 L27.09 25.16 L26.48 25.53 L25.85 25.84 L25.21 26.08 L24.57 26.27 L23.92 26.39 L23.29 26.45 L22.68 26.46 L22.09 26.41 L21.57 26.45 L21.06 26.46 L20.57 26.44 L20.08 26.37 L19.61 26.27 L19.16 26.14 L18.74 25.97 L18.34 25.78 L17.97 25.56 L17.62 25.32 L17.32 25.06 L17.04 24.78 L16.80 24.48 L16.60 24.17 L16.43 23.86 L16.30 23.54 L16.20 23.22 L16.14 22.90 L16.12 22.58 L16.13 22.27 L16.19 21.96 L16.29 21.67 L16.41 21.40 L16.56 21.15 L16.74 20.92 L16.93 20.71 L17.13 20.53 L17.35 20.37 L17.58 20.24 L17.82 20.13 L18.06 20.04 L18.30 19.98 L18.53 19.95 L18.76 19.94 L18.98 19.95 L19.19 19.98 L19.38 20.03 M27.78 28.27 L27.07 28.79 L26.31 29.26 L25.51 29.67 L24.67 30.02 L23.81 30.31 L22.93 30.53 L22.03 30.68 L21.12 30.77 L20.21 30.79 L19.31 30.74 L18.41 30.62 L17.54 30.44 L16.68 30.20 L15.86 29.89 L15.07 29.53 L14.33 29.11 L13.63 28.64 L12.98 28.12 L12.38 27.55 L11.85 26.95 L11.38 26.31 L10.97 25.64 L10.63 24.94 L10.36 24.23 L10.17 23.50 L10.04 22.76 L9.99 22.02 L10.09 21.28 L10.42 20.58 L10.82 19.92 L11.27 19.31 L11.78 18.76 L12.33 18.27 L12.91 17.84 L13.52 17.47 L14.15 17.16 L14.79 16.92 L15.43 16.73 L16.08 16.61 L16.71 16.55 L17.32 16.54 L17.91 16.59 L18.43 16.55 L18.94 16.54 L19.43 16.56 L19.92 16.63 L20.39 16.73 L20.84 16.86 L21.26 17.03 L21.66 17.22 L22.03 17.44 L22.38 17.68 L22.68 17.94 L22.96 18.22 L23.20 18.52 L23.40 18.83 L23.57 19.14 L23.70 19.46 L23.80 19.78 L23.86 20.10 L23.88 20.42 L23.87 20.73 L23.81 21.04 L23.71 21.33 L23.59 21.60 L23.44 21.85 L23.26 22.08 L23.07 22.29 L22.87 22.47 L22.65 22.63 L22.42 22.76 L22.18 22.87 L21.94 22.96 L21.70 23.02 L21.47 23.05 L21.24 23.06 L21.02 23.05 L20.81 23.02 L20.62 22.97" fill="none" stroke="#CED0D6" stroke-width="1.7" stroke-linecap="round"/></svg>
<svg style="left:1883px;top:163px;" width="26" height="28" viewBox="0 0 26 28"><g fill="none" stroke="#CED0D6" stroke-width="1.6"><ellipse cx="12" cy="6" rx="10" ry="3.5"/><path d="M2 6 v15 a10 3.5 0 0 0 20 0 v-15"/><path d="M2 11 a10 3.5 0 0 0 20 0"/><path d="M2 16 a10 3.5 0 0 0 20 0"/></g></svg>
<svg style="left:1881.88px;top:218.75px" width="28.22" height="16.97" viewBox="0 0 20 14" preserveAspectRatio="none"><path d="M1.5 13 L4 1.5 M3.4 4.2 C4.6 2 6.3 1.2 8 1.2 C10 1.2 10.8 2.4 10.4 4.3 L8.6 13 M10.3 4.3 C11.5 2 13.2 1.2 15 1.2 C17 1.2 17.8 2.4 17.4 4.3 L15.6 13" fill="none" stroke="#CED0D6" stroke-width="2.0" vector-effect="non-scaling-stroke" stroke-linecap="round"/></svg>
<div style="left:46px;top:309px;width:218px;height:49.5px;background:transparent;box-sizing:border-box;border:4px solid #F71B12;border-radius:3px"></div>
<svg style="left:17.5px;top:1005.5px;" width="12" height="12" viewBox="0 0 12 12"><rect x="1" y="1" width="9.5" height="9.5" rx="2.3" fill="#25324D" stroke="#548AF7" stroke-width="1.4"/></svg>
<div class="t" style="left:33px;top:1000.71px;font-size:16.9px;color:#9DA0A8;font-family:'Liberation Sans', sans-serif;">springmvc-test</div>
<svg style="left:156px;top:1005px;" width="9" height="12" viewBox="0 0 9 12"><path d="M1 1 L5.8 5.5 L1 10" fill="none" stroke="#9DA0A8" stroke-width="1.3"/></svg>
<svg style="left:173.5px;top:1005.5px;" width="12" height="12" viewBox="0 0 12 12"><rect x="1" y="1" width="9.5" height="9.5" rx="2.3" fill="#25324D" stroke="#548AF7" stroke-width="1.4"/></svg>
<div class="t" style="left:189px;top:1000.98px;font-size:16.6px;color:#9DA0A8;font-family:'Liberation Sans', sans-serif;">springmvc-01</div>
<svg style="left:301px;top:1005px;" width="9" height="12" viewBox="0 0 9 12"><path d="M1 1 L5.8 5.5 L1 10" fill="none" stroke="#9DA0A8" stroke-width="1.3"/></svg>
<div class="t" style="left:319px;top:1001.25px;font-size:16.3px;color:#9DA0A8;font-family:'Liberation Sans', sans-serif;">src</div>
<svg style="left:351px;top:1005px;" width="9" height="12" viewBox="0 0 9 12"><path d="M1 1 L5.8 5.5 L1 10" fill="none" stroke="#9DA0A8" stroke-width="1.3"/></svg>
<div class="t" style="left:370.4px;top:1001.25px;font-size:16.3px;color:#9DA0A8;font-family:'Liberation Sans', sans-serif;">main</div>
<svg style="left:416px;top:1005px;" width="9" height="12" viewBox="0 0 9 12"><path d="M1 1 L5.8 5.5 L1 10" fill="none" stroke="#9DA0A8" stroke-width="1.3"/></svg>
<div class="t" style="left:434.5px;top:1001.25px;font-size:16.3px;color:#9DA0A8;font-family:'Liberation Sans', sans-serif;">java</div>
<svg style="left:475px;top:1005px;" width="9" height="12" viewBox="0 0 9 12"><path d="M1 1 L5.8 5.5 L1 10" fill="none" stroke="#9DA0A8" stroke-width="1.3"/></svg>
<div class="t" style="left:494.3px;top:1001.25px;font-size:16.3px;color:#9DA0A8;font-family:'Liberation Sans', sans-serif;">org</div>
<svg style="left:531px;top:1005px;" width="9" height="12" viewBox="0 0 9 12"><path d="M1 1 L5.8 5.5 L1 10" fill="none" stroke="#9DA0A8" stroke-width="1.3"/></svg>
<div class="t" style="left:550.5px;top:1001.43px;font-size:16.1px;color:#9DA0A8;font-family:'Liberation Sans', sans-serif;">example</div>
<svg style="left:623px;top:1005px;" width="9" height="12" viewBox="0 0 9 12"><path d="M1 1 L5.8 5.5 L1 10" fill="none" stroke="#9DA0A8" stroke-width="1.3"/></svg>
<svg style="left:643px;top:998px;" width="22" height="22" viewBox="0 0 22 22"><circle cx="10" cy="12" r="8.3" fill="#25324D" stroke="#548AF7" stroke-width="1.6"/><path d="M13 9.5 a3.7 3.7 0 1 0 0 5" fill="none" stroke="#548AF7" stroke-width="1.6"/><path d="M13.5 2 L20.5 6 L13.5 10 Z" fill="#2E4D30" stroke="#5FB865" stroke-width="1.2" stroke-linejoin="round"/></svg>
<div class="t" style="left:668.6px;top:1001.25px;font-size:16.3px;color:#9DA0A8;font-family:'Liberation Sans', sans-serif;">Main</div>
<div class="t" style="left:1655px;top:1001.25px;font-size:16.3px;color:#56709B;font-family:'Liberation Sans', sans-serif;">7:2</div>
<div class="t" style="left:1697px;top:1001.25px;font-size:16.3px;color:#56709B;font-family:'Liberation Sans', sans-serif;">LF</div>
<div class="t" style="left:1733px;top:1001.25px;font-size:16.3px;color:#56709B;font-family:'Liberation Sans', sans-serif;">UTF-8</div>
<div style="left:1545px;top:800px;width:371px;height:53px;background:#FFFFFF;"></div>
<svg style="left:1545px;top:800px;" width="53" height="53" viewBox="0 0 53 53">
<rect width="53" height="53" fill="#D9C6B8"/>
<rect x="0" y="0" width="53" height="6" fill="#CDB7A8"/>
<rect x="9" y="1" width="14" height="6" fill="#EDEDED"/><rect x="10" y="3" width="12" height="1" fill="#555"/>
<rect x="32" y="6" width="21" height="30" fill="#5E5A48"/>
<rect x="36" y="6" width="8" height="10" fill="#2E2A26"/>
<rect x="42" y="8" width="8" height="9" fill="#B8C8C8"/>
<rect x="38" y="20" width="6" height="20" fill="#FFFFFF"/>
<rect x="33" y="25" width="5" height="15" fill="#2A2624"/>
<rect x="46" y="25" width="5" height="20" fill="#1A1A1A"/>
<rect x="47" y="22" width="3" height="5" fill="#E8D0C0"/>
<rect x="3" y="13" width="6" height="10" fill="#D84A2A"/><rect x="4" y="23" width="4" height="10" fill="#1E2030"/><rect x="5" y="10" width="3" height="3" fill="#3A2A2A"/>
<rect x="2" y="31" width="20" height="10" fill="#2A2A2A"/><rect x="6" y="33" width="6" height="6" fill="#D8D0C8"/><rect x="14" y="33" width="5" height="8" fill="#C0C0C0"/>
<rect x="16" y="40" width="3" height="13" fill="#1A1A1A"/>
<path d="M26 3 h6 l2 6 -1 10 2 12 -2 22 h-8 l-2 -22 1 -12 -1 -10 z" fill="#FFFFFF"/>
<g fill="#222"><circle cx="28" cy="14" r="0.7"/><circle cx="30" cy="18" r="0.8"/><circle cx="26" cy="22" r="0.6"/><circle cx="31" cy="25" r="0.9"/><circle cx="28" cy="28" r="0.6"/></g>
<rect x="29" y="36" width="9" height="15" fill="#D2482E"/><rect x="32" y="33" width="3" height="4" fill="#D8A070"/>
<rect x="29" y="50" width="9" height="3" fill="#1E2848"/>
<rect x="0" y="44" width="16" height="9" fill="#A08070"/>
<rect x="40" y="44" width="12" height="9" fill="#9A9A9A" opacity="0.6"/>
</svg>
<div class="t" style="left:1659.7px;top:807.13px;font-size:16.1px;color:#333333;font-family:'Liberation Sans', sans-serif;">First Flight</div>
<div class="t" style="left:1658.7px;top:827.83px;font-size:15.1px;color:#555555;font-family:'Liberation Sans', sans-serif;">Peder Elias</div>
<svg style="left:1804px;top:816px;" width="24" height="20" viewBox="0 0 24 20"><path d="M12 17.5 C5 12 2 9.5 2 6.5 A4.2 4.2 0 0 1 12 4.5 A4.2 4.2 0 0 1 22 6.5 C22 9.5 19 12 12 17.5 Z" fill="none" stroke="#888" stroke-width="1.4"/></svg>
<svg style="left:1835px;top:816px;" width="24" height="22" viewBox="0 0 24 22"><path d="M2 8 h4 l6 -5 v16 l-6 -5 h-4 z" fill="#888"/><path d="M15 7 a5 5 0 0 1 0 8 M17.5 4.5 a8.5 8.5 0 0 1 0 13" fill="none" stroke="#888" stroke-width="1.4"/></svg>
<svg style="left:1866px;top:818px;" width="20" height="18" viewBox="0 0 20 18"><g stroke="#888" stroke-width="1.5"><path d="M2 2 h1.5 M6 2 h12 M2 8.5 h1.5 M6 8.5 h12 M2 15 h1.5 M6 15 h12"/></g></svg>
<svg style="left:1897px;top:805px;" width="16" height="30" viewBox="0 0 16 30"><path d="M2.5 2.5 L12.5 12.5 M12.5 2.5 L2.5 12.5" stroke="#AAA" stroke-width="1.3"/><rect x="2.5" y="20.5" width="10" height="6" fill="none" stroke="#BBB" stroke-width="1.2"/></svg>
<svg style="left:1780px;top:912px;" width="140" height="117" viewBox="0 0 140 117">
<g>
<path d="M35 13 q-3 -8 3 -11 q5 5 -3 11 z" fill="#8CD27A" stroke="#6A4A2A" stroke-width="0.6"/>
<path d="M33 15 q-8 -5 -12 1 q5 5 12 -1 z" fill="#8CD27A" stroke="#6A4A2A" stroke-width="0.6"/>
<path d="M34 14 l2 5" stroke="#7A4A2A" stroke-width="0.8"/>
<path d="M50 80 q20 -4 24 -8 q6 4 -2 10 q-10 6 -22 8 z" fill="#FFFFFF" stroke="#9A4A2A" stroke-width="1.1"/>
<path d="M26 84 q12 -4 30 -2 q6 6 4 18 l-4 16 h-28 l-6 -14 z" fill="#FFFFFF" stroke="#9A4A2A" stroke-width="1"/><path d="M36 82 q14 2 16 8 q2 6 -8 8" fill="none" stroke="#9A4A2A" stroke-width="1.2"/>
<ellipse cx="44" cy="49" rx="36.5" ry="30" fill="#FFFFFF" stroke="#9A4A2A" stroke-width="1.2"/>
<path d="M42 40 l7 2.5 -6 3 M52 43 q2 3 3 0 q1 3 3 0 M66 40 l-6 3 6 2" fill="none" stroke="#6A3A2A" stroke-width="1.1"/>
<ellipse cx="43" cy="50" rx="5" ry="2.5" fill="#F9C8C2"/>
<ellipse cx="70" cy="45" rx="5" ry="2.5" fill="#F9C8C2"/>
<path d="M68 64.2 C57.6 57 59.2 49.8 64.0 49.8 C66.4 49.8 68 52.2 68 53.8 C68 52.2 69.6 49.8 72.0 49.8 C76.8 49.8 78.4 57 68 64.2 Z" fill="#F59CA0"/>
<path d="M42 65 q4 -2 6 -4" stroke="#C0604A" stroke-width="0.8" fill="none"/>
<circle cx="17" cy="106" r="12" fill="#8FD07A"/><circle cx="41" cy="107" r="12" fill="#8FD07A"/><circle cx="65" cy="107" r="12" fill="#8FD07A"/><circle cx="90" cy="106" r="12" fill="#8FD07A"/>
<g fill="none" stroke="#8A4A2A" stroke-width="2"><path d="M11 100 l12 12 M23 100 l-12 12 M17 98 v14"/><path d="M36 104 h10 M41 100 v12 M37 112 l8 -4"/><path d="M59 101 h12 M62 105 h6 v7 h-6 z"/><path d="M85 100 l10 4 M84 110 h12 M90 102 v10"/></g>
<path d="M97 30.15 C92.45 27 93.15 23.85 95.25 23.85 C96.3 23.85 97 24.9 97 25.6 C97 24.9 97.7 23.85 98.75 23.85 C100.85 23.85 101.55 27 97 30.15 Z" fill="#F7C0B8"/><path d="M120 34.25 C116.75 32 117.25 29.75 118.75 29.75 C119.5 29.75 120 30.5 120 31.0 C120 30.5 120.5 29.75 121.25 29.75 C122.75 29.75 123.25 32 120 34.25 Z" fill="#F7C0B8"/><path d="M89 47.05 C83.15 43 84.05 38.95 86.75 38.95 C88.1 38.95 89 40.3 89 41.2 C89 40.3 89.9 38.95 91.25 38.95 C93.95 38.95 94.85 43 89 47.05 Z" fill="#F7C0B8"/><path d="M105 50.05 C99.15 46 100.05 41.95 102.75 41.95 C104.1 41.95 105 43.3 105 44.2 C105 43.3 105.9 41.95 107.25 41.95 C109.95 41.95 110.85 46 105 50.05 Z" fill="#F7C0B8"/><path d="M124 64.6 C118.8 61 119.6 57.4 122.0 57.4 C123.2 57.4 124 58.6 124 59.4 C124 58.6 124.8 57.4 126.0 57.4 C128.4 57.4 129.2 61 124 64.6 Z" fill="#F7C0B8"/><path d="M93 70.95 C85.85 66 86.95 61.05 90.25 61.05 C91.9 61.05 93 62.7 93 63.8 C93 62.7 94.1 61.05 95.75 61.05 C99.05 61.05 100.15 66 93 70.95 Z" fill="#F7C0B8"/><path d="M110 80.6 C104.8 77 105.6 73.4 108.0 73.4 C109.2 73.4 110 74.6 110 75.4 C110 74.6 110.8 73.4 112.0 73.4 C114.4 73.4 115.2 77 110 80.6 Z" fill="#F7C0B8"/><path d="M90 89.5 C83.5 85 84.5 80.5 87.5 80.5 C89.0 80.5 90 82.0 90 83.0 C90 82.0 91.0 80.5 92.5 80.5 C95.5 80.5 96.5 85 90 89.5 Z" fill="#F7C0B8"/><path d="M86 107.05 C80.15 103 81.05 98.95 83.75 98.95 C85.1 98.95 86 100.3 86 101.2 C86 100.3 86.9 98.95 88.25 98.95 C90.95 98.95 91.85 103 86 107.05 Z" fill="#F7C0B8"/>
</g></svg>
<div class="t" style="left:1551px;top:986.15px;font-size:36.3px;color:rgba(200,200,200,0.9);font-family:'Liberation Sans', sans-serif;-webkit-text-stroke:0;transform:scaleX(0.915);transform-origin:0 0">CSDN</div>
<div class="t" style="left:1659px;top:991.07px;font-size:27px;color:rgba(200,200,200,0.9);font-family:'Liberation Sans', sans-serif;-webkit-text-stroke:0">@</div>
<div class="t" style="left:1691px;top:987.05px;font-size:35.3px;color:rgba(200,200,200,0.9);font-family:'Liberation Sans', sans-serif;-webkit-text-stroke:0">Pumpkin</div>
<div style="left:1829px;top:1021px;width:38px;height:2.2px;background:rgba(200,200,200,0.9);"></div>
<div class="t" style="left:1868.5px;top:987.78px;font-size:34.5px;color:rgba(200,200,200,0.9);font-family:'Liberation Sans', sans-serif;-webkit-text-stroke:0">girl</div>
</body></html>
